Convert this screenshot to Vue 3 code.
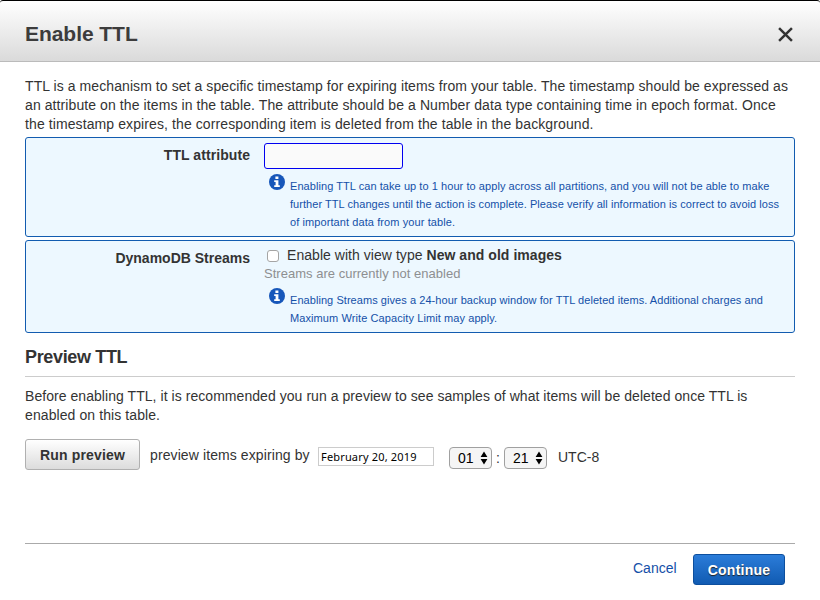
<script setup>
import { ref } from 'vue'

const attribute = ref('')
const streams = ref(false)
const date = ref('February 20, 2019')

const intro = [
  { text: 'TTL is a mechanism to set a specific timestamp for expiring items from your table. The timestamp should be expressed as', fit: 'i1' },
  { text: 'an attribute on the items in the table. The attribute should be a Number data type containing time in epoch format. Once', fit: 'i2' },
  { text: 'the timestamp expires, the corresponding item is deleted from the table in the background.', fit: 'i3' },
]
const ttlNote = [
  { text: 'Enabling TTL can take up to 1 hour to apply across all partitions, and you will not be able to make', fit: 'n1' },
  { text: 'further TTL changes until the action is complete. Please verify all information is correct to avoid loss', fit: 'n2' },
  { text: 'of important data from your table.', fit: 'n3' },
]
const streamNote = [
  { text: 'Enabling Streams gives a 24-hour backup window for TTL deleted items. Additional charges and', fit: 's1' },
  { text: 'Maximum Write Capacity Limit may apply.', fit: 's2' },
]
const previewText = [
  { text: 'Before enabling TTL, it is recommended you run a preview to see samples of what items will be deleted once TTL is', fit: 'p1' },
  { text: 'enabled on this table.', fit: 'p2' },
]
const times = ['01', '21']
</script>

<template>
  <div class="dialog">
    <header class="head">
      <h1>Enable TTL</h1>
      <svg class="close" viewBox="0 0 14 14"><path d="M1 1L13 13M13 1L1 13" /></svg>
    </header>

    <main class="body">
      <div class="para intro">
        <div v-for="l in intro" :key="l.fit" class="line"><span :class="l.fit">{{ l.text }}</span></div>
      </div>

      <section class="box ttl">
        <div class="label"><span class="lab1">TTL attribute</span></div>
        <div class="field">
          <input v-model="attribute" class="attr" type="text" />
          <div class="note">
            <svg class="info" viewBox="0 0 16 16"><circle cx="8" cy="8" r="8" /><path d="M6.4 2.5h3v2.4h-3zM5.2 6.3h4.2v5h1.4v1.6H5.2v-1.6h1.4V7.9H5.2z" /></svg>
            <div class="note-text">
              <div v-for="l in ttlNote" :key="l.fit" class="line"><span :class="l.fit">{{ l.text }}</span></div>
            </div>
          </div>
        </div>
      </section>

      <section class="box streams">
        <div class="label"><span class="lab2">DynamoDB Streams</span></div>
        <div class="field">
          <label class="check">
            <input v-model="streams" type="checkbox" />
            <span class="c1">Enable with view type <b>New and old images</b></span>
          </label>
          <div class="status"><span class="c2">Streams are currently not enabled</span></div>
          <div class="note">
            <svg class="info" viewBox="0 0 16 16"><circle cx="8" cy="8" r="8" /><path d="M6.4 2.5h3v2.4h-3zM5.2 6.3h4.2v5h1.4v1.6H5.2v-1.6h1.4V7.9H5.2z" /></svg>
            <div class="note-text">
              <div v-for="l in streamNote" :key="l.fit" class="line"><span :class="l.fit">{{ l.text }}</span></div>
            </div>
          </div>
        </div>
      </section>

      <h2><span>Preview TTL</span></h2>
      <div class="para preview">
        <div v-for="l in previewText" :key="l.fit" class="line"><span :class="l.fit">{{ l.text }}</span></div>
      </div>

      <div class="run">
        <button class="btn-run"><span>Run preview</span></button>
        <span class="by">preview items expiring by</span>
        <input v-model="date" class="date" type="text" />
        <div class="time">
          <template v-for="(t, i) in times" :key="t">
            <span v-if="i" class="colon">:</span>
            <div class="select">
              <span>{{ t }}</span>
              <svg viewBox="0 0 8 14"><path d="M4 0.5L7.4 6H0.6zM4 13.5L7.4 8H0.6z" /></svg>
            </div>
          </template>
        </div>
        <span class="utc">UTC-8</span>
      </div>
    </main>

    <footer class="foot">
      <a class="cancel">Cancel</a>
      <button class="btn-go"><span>Continue</span></button>
    </footer>
  </div>
</template>

<style>
body {
  margin: 0;
  background: #fff;
}
</style>

<style scoped>
* {
  box-sizing: border-box;
}
.dialog {
  width: 820px;
  height: 600px;
  display: flex;
  flex-direction: column;
  background: #fff;
  color: #333;
  font: 14px/19px "Liberation Sans", Arial, sans-serif;
  overflow: hidden;
}
.head {
  height: 62px;
  flex: none;
  display: flex;
  align-items: center;
  justify-content: space-between;
  padding: 5px 27px 0 25px;
  border-top: 1px solid #000;
  border-bottom: 1px solid #bbb;
  border-radius: 3px 3px 0 0;
  background: linear-gradient(#fff, #dadada);
}
h1 {
  margin: 0;
  padding-top: 1px;
  font-size: 21px;
  line-height: 26px;
  letter-spacing: -0.05px;
  color: #3c3c3c;
}
.close {
  width: 15px;
  height: 15px;
  margin-top: 2px;
}
.close path {
  stroke: #333;
  stroke-width: 2.3;
  fill: none;
}
.body {
  padding: 15px 25px 0;
  flex: 1;
}
.line {
  white-space: nowrap;
}
.i1 { letter-spacing: 0.076px; }
.i2 { letter-spacing: 0.091px; }
.i3 { letter-spacing: 0.1px; }
.n1 { letter-spacing: 0.062px; }
.n2 { letter-spacing: 0.053px; }
.n3 { letter-spacing: 0.09px; }
.s1 { letter-spacing: 0.057px; }
.s2 { letter-spacing: 0.09px; }
.p1 { letter-spacing: 0.053px; }
.p2 { letter-spacing: 0.09px; }
.c1 { letter-spacing: 0.045px; }
.c2 { letter-spacing: 0.02px; }
.lab1 { letter-spacing: 0.07px; }
.intro {
  margin-bottom: 3px;
}
.box {
  display: flex;
  border: 1px solid #125cb0;
  border-radius: 3px;
  background: #edf8ff;
}
.ttl {
  height: 100px;
  margin-bottom: 3px;
}
.streams {
  height: 93px;
}
.label {
  width: 224px;
  flex: none;
  text-align: right;
  font-weight: bold;
  white-space: nowrap;
  padding-top: 8px;
}
.field {
  padding: 5px 0 0 14px;
}
.attr {
  display: block;
  width: 139px;
  height: 26px;
  border: 1px solid #0000f0;
  border-radius: 3px;
  background: #fafafa;
  padding: 0 4px;
  outline: none;
}
.note {
  display: flex;
  gap: 5px;
  padding-left: 5px;
  margin-top: 5px;
  color: #1450a8;
  font-size: 11px;
  line-height: 18px;
}
.note-text {
  padding-top: 3px;
}
.info {
  width: 16px;
  height: 16px;
  flex: none;
}
.info circle {
  fill: #1757ba;
}
.info path {
  fill: #fff;
}
.check {
  display: flex;
  align-items: center;
  gap: 8px;
  height: 19px;
  white-space: nowrap;
}
.check input {
  appearance: none;
  width: 12px;
  height: 12px;
  margin: 0 0 0 3px;
  border: 1px solid #a5a5a5;
  border-radius: 3px;
  background: #fff;
}
.status {
  color: #8d8f91;
  font-size: 13px;
  line-height: 18px;
}
h2 {
  margin: 0 0 10px;
  padding: 14px 0 9px;
  height: 44px;
  border-bottom: 1px solid #ccc;
  font-size: 18px;
  letter-spacing: -0.35px;
  line-height: 20px;
}
.run {
  display: flex;
  align-items: flex-start;
  margin-top: 14px;
  white-space: nowrap;
}
.btn-run {
  width: 115px;
  height: 31px;
  padding: 2px 0 0;
  border: 1px solid #b0b0b0;
  border-radius: 3px;
  background: linear-gradient(#fff, #dcdcdc);
  color: #333;
  font: bold 14px/19px "Liberation Sans", Arial, sans-serif;
  letter-spacing: 0.17px;
}
.by {
  width: 168px;
  margin-left: 10px;
  padding-top: 7px;
  letter-spacing: 0.1px;
}
.date {
  width: 116px;
  height: 19px;
  margin-top: 8px;
  padding: 0 2px 1px;
  border: 1px solid #ccc;
  background: #fff;
  color: #000;
  font: 11px/16px "Noto Sans", sans-serif;
  letter-spacing: 0.17px;
}
.time {
  display: flex;
  margin: 8px 0 0 15px;
  width: 98px;
  justify-content: space-between;
}
.select {
  width: 43px;
  height: 22px;
  border: 1px solid #a0a0a0;
  border-radius: 4px;
  background: #f5f5f5;
  color: #000;
  display: flex;
  align-items: center;
  justify-content: space-between;
  padding: 0 3px 0 8px;
}
.select svg {
  width: 8px;
  height: 14px;
}
.colon {
  line-height: 22px;
}
.utc {
  margin-left: 11px;
  padding-top: 9px;
}
.foot {
  margin: 0 25px;
  height: 57px;
  flex: none;
  display: flex;
  align-items: flex-start;
  justify-content: flex-end;
  border-top: 1px solid #aaa;
  padding: 10px 10px 0;
}
.cancel {
  color: #1450a8;
  width: 60px;
  padding-top: 5px;
}
.btn-go {
  width: 92px;
  height: 31px;
  padding: 2px 0 0;
  border: 1px solid #0d4f9e;
  border-radius: 3px;
  background: linear-gradient(#2b7cd9, #115bb2);
  color: #fff;
  font: bold 14px/19px "Liberation Sans", Arial, sans-serif;
  letter-spacing: 0.25px;
  text-shadow: 0 1px 1px #222;
}
</style>
